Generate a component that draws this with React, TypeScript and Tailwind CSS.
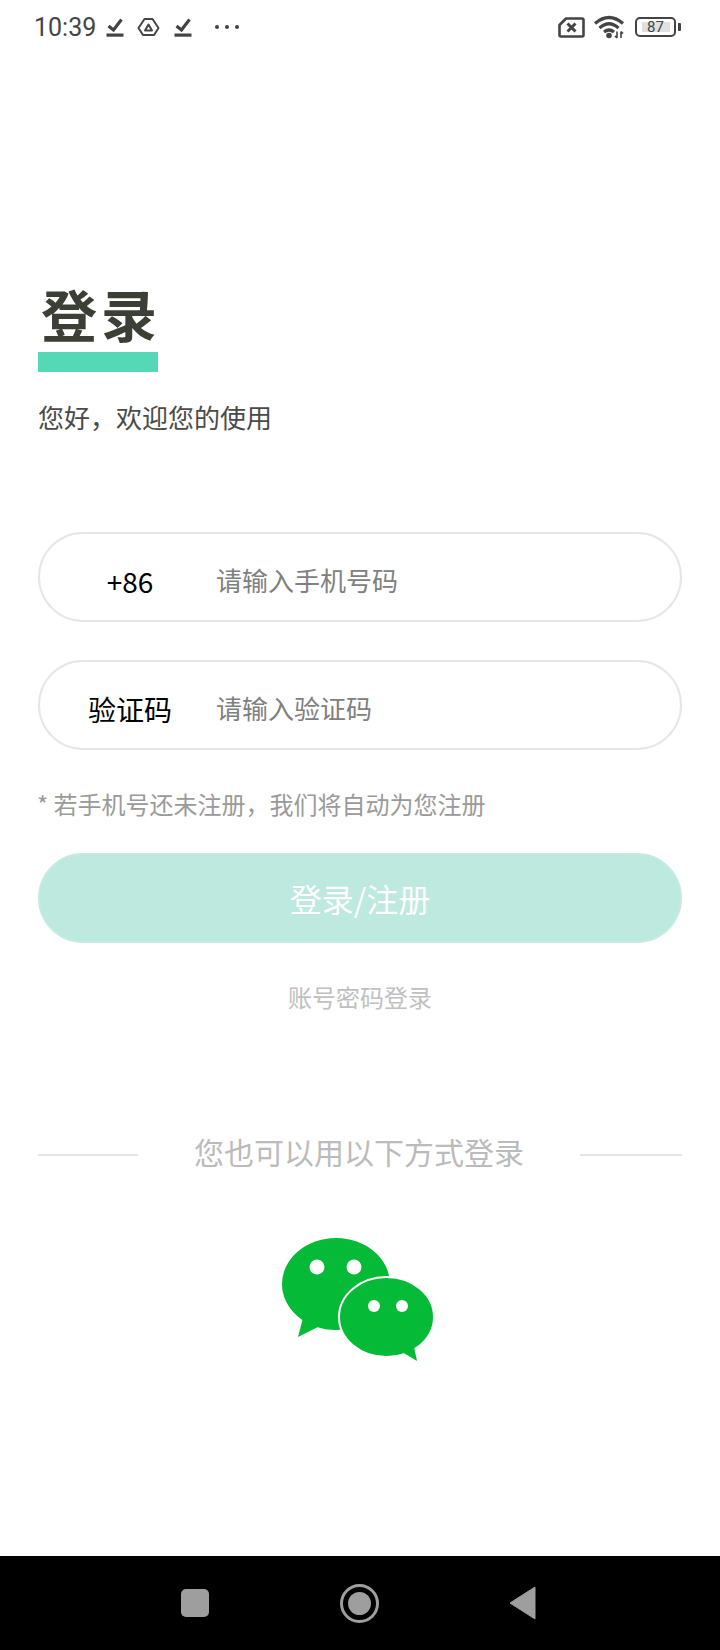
const cjk = "font-['Noto_Sans_CJK_SC','Noto_Sans',sans-serif]";

const CheckIcon = () => (
  <svg width="18" height="21" viewBox="0 0 18 21" fill="none">
    <path d="M2.5 9 L7.5 13 L15.5 2.5" stroke="#444" strokeWidth="3.2" />
    <rect x="0.5" y="16.5" width="17" height="3.2" fill="#444" />
  </svg>
);

const StatusBar = () => (
  <div className="h-[54px] flex items-center pl-[34px] pr-[39px] text-[#444]">
    <span className="font-['Roboto',sans-serif] text-[25px] leading-none w-[72px]">10:39</span>
    <CheckIcon />
    <svg className="ml-[13px]" width="23" height="20" viewBox="0 0 23 20" fill="none">
      <path d="M7.5 2 H15.5 L21.5 11 L17 18 H6 L1.5 11 Z" stroke="#444" strokeWidth="2" strokeLinejoin="round" />
      <path d="M11.5 7.5 L15 13.5 H8 Z" stroke="#444" strokeWidth="2" strokeLinejoin="round" />
    </svg>
    <span className="ml-[14px]"><CheckIcon /></span>
    <div className="ml-[23px] flex gap-[6px]">
      <span className="size-[4px] rounded-full bg-[#444]" />
      <span className="size-[4px] rounded-full bg-[#444]" />
      <span className="size-[4px] rounded-full bg-[#444]" />
    </div>
    <div className="flex-1" />
    <svg width="27" height="21" viewBox="0 0 27 21" fill="none">
      <path d="M8 1.5 H24 Q25.5 1.5 25.5 3 V18 Q25.5 19.5 24 19.5 H3 Q1.5 19.5 1.5 18 V8 Z" stroke="#444" strokeWidth="2.6" strokeLinejoin="round" />
      <path d="M9.5 6.5 L17.5 14.5 M17.5 6.5 L9.5 14.5" stroke="#444" strokeWidth="3" />
    </svg>
    <svg className="ml-[9px]" width="31" height="24" viewBox="0 0 31 24" fill="none">
      <path d="M1 8.5 Q15 -3.5 29 8.5" stroke="#444" strokeWidth="3.2" />
      <path d="M5.5 13 Q15 4.5 24.5 13" stroke="#444" strokeWidth="3.2" />
      <path d="M10 17 Q15 13 20 17" stroke="#444" strokeWidth="3.2" />
      <circle cx="15" cy="20.5" r="2.8" fill="#444" />
      <path d="M23 16.5 V23 M21 21 L23 23 M27 23 V16.5 M27 16.5 L29 18.5" stroke="#444" strokeWidth="1.6" />
    </svg>
    <div className="ml-[10px] flex items-center">
      <div className="w-[41px] h-[20px] border-2 border-[#444] rounded-[5px] flex items-center justify-center">
        <span className="w-[28px] h-[10px] bg-[#e0e0e0] flex items-center justify-center font-['Roboto',sans-serif] text-[15px] leading-none text-[#444]">87</span>
      </div>
      <span className="ml-[2px] w-[3px] h-[8px] rounded-r-[1px] bg-[#444]" />
    </div>
  </div>
);

const Field = ({ label, placeholder }: { label: string; placeholder: string }) => (
  <div className="h-[90px] rounded-full border-2 border-[#e6e6e6] flex items-center bg-white">
    <span className="ml-[17px] w-[146px] text-center text-[28px] text-black leading-none mt-[8px]">{label}</span>
    <input
      placeholder={placeholder}
      className={`${cjk} ml-[13px] mt-[4px] flex-1 min-w-0 pr-[40px] text-[26px] text-[#333] placeholder:text-[#808080] outline-none bg-transparent`}
    />
  </div>
);

const WeChat = () => (
  <svg className="ml-[242px] mt-[62px]" width="156" height="130" viewBox="0 0 156 130">
    <ellipse cx="56" cy="48" rx="54" ry="46" fill="#04ba36" />
    <path d="M23 82 L18 101 L38 91 Z" fill="#04ba36" />
    <circle cx="37" cy="31" r="7.5" fill="#fff" />
    <circle cx="74" cy="31" r="7.5" fill="#fff" />
    <ellipse cx="106.5" cy="81" rx="47.5" ry="40" fill="#04ba36" stroke="#fff" strokeWidth="2" />
    <path d="M122 116 L137 125 L134 111 Z" fill="#04ba36" />
    <circle cx="94" cy="70" r="6" fill="#fff" />
    <circle cx="122" cy="70" r="6" fill="#fff" />
  </svg>
);

const NavBar = () => (
  <div className="h-[94px] bg-black flex items-center pl-[181px] pr-[184px] justify-between">
    <span className="size-[28px] rounded-[5px] bg-[#9e9e9e]" />
    <span className="size-[39px] rounded-full border-[3px] border-[#9e9e9e] flex items-center justify-center">
      <span className="size-[23px] rounded-full bg-[#9e9e9e]" />
    </span>
    <svg width="27" height="34" viewBox="0 0 27 34">
      <path d="M26 1 V33 L1 17 Z" fill="#9e9e9e" stroke="#9e9e9e" strokeWidth="1" strokeLinejoin="round" />
    </svg>
  </div>
);

export default function App() {
  return (
    <div className={`${cjk} w-[720px] h-[1650px] bg-white flex flex-col overflow-hidden`}>
      <StatusBar />
      <div className="flex-1 px-[38px]">
        <div className="mt-[223px] w-[120px]">
          <h1 className="h-[75px] leading-[71px] text-[56px] font-semibold tracking-[4px] text-[#3b3f36] whitespace-nowrap pl-[3px]">登录</h1>
          <div className="h-[20px] bg-[#55d8b6]" />
        </div>
        <p className="mt-[27px] text-[26px] leading-[36px] text-[#4a4a4a]">您好，欢迎您的使用</p>

        <div className="mt-[97px] flex flex-col gap-[38px]">
          <Field label="+86" placeholder="请输入手机号码" />
          <Field label="验证码" placeholder="请输入验证码" />
        </div>

        <p className="mt-[38px] -ml-[1px] text-[24px] leading-[32px] text-[#9a9a9a]">* 若手机号还未注册，我们将自动为您注册</p>

        <button className="mt-[33px] w-full h-[90px] rounded-full bg-[#bde9de] border-2 border-[#c4ebe1] text-white text-[32px]">登录/注册</button>

        <p className="mt-[38px] text-center text-[24px] leading-[32px] text-[#c0c0c0]">账号密码登录</p>

        <div className="mt-[121px] flex items-center justify-between">
          <span className="w-[100px] h-[2px] bg-[#e4e4e4] mt-[2px]" />
          <span className="text-[30px] leading-[40px] text-[#bbbbbb] -mt-[3px] mb-[3px]">您也可以用以下方式登录</span>
          <span className="w-[102px] h-[2px] bg-[#e4e4e4] mt-[2px]" />
        </div>

        <WeChat />
      </div>
      <NavBar />
    </div>
  );
}
